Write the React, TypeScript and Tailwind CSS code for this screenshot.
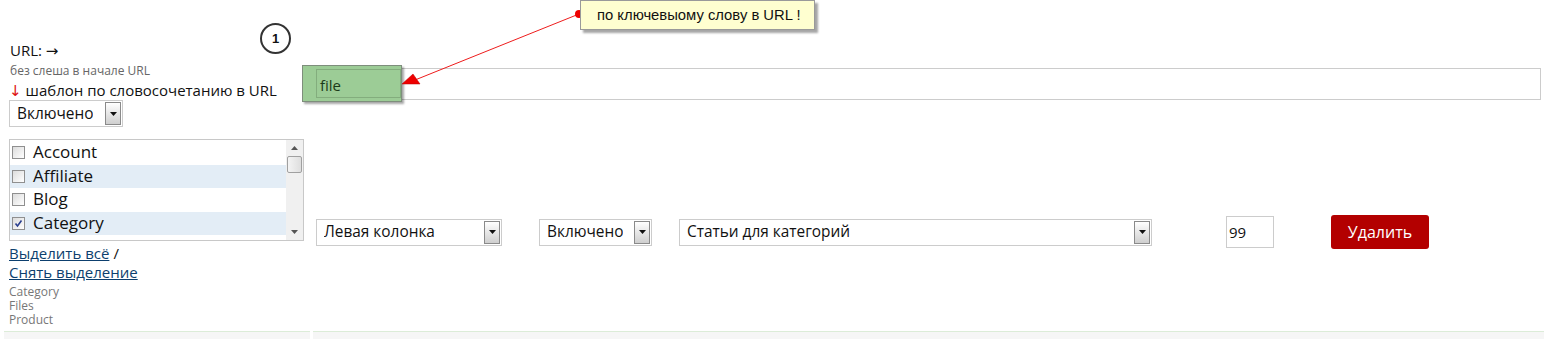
import React from "react";

const font = { fontFamily: '"Open Sans", "DejaVu Sans", sans-serif' };

function FakeSelect({ label, className }: { label: string; className: string }) {
  return (
    <div
      className={`flex h-[27px] items-center justify-between border border-[#cccccc] bg-white pl-[7px] pr-[1px] text-[15.4px] text-[#111] ${className}`}
    >
      <span className="truncate">{label}</span>
      <span className="flex h-[23px] w-[16px] shrink-0 items-center justify-center border border-[#8a8a8a] bg-gradient-to-b from-white to-[#cfcfcf]">
        <svg width="7" height="4" viewBox="0 0 7 4">
          <path d="M0 0h7L3.5 4z" fill="#111" />
        </svg>
      </span>
    </div>
  );
}

const items = [
  { name: "Account", checked: false },
  { name: "Affiliate", checked: false },
  { name: "Blog", checked: false },
  { name: "Category", checked: true },
  { name: "", checked: false },
];

function CheckBox({ checked }: { checked: boolean }) {
  return (
    <span className="flex h-[13px] w-[13px] shrink-0 items-center justify-center border border-[#8f8f8f] bg-gradient-to-br from-[#dcdcdc] to-white">
      {checked && (
        <svg width="9" height="9" viewBox="0 0 9 9">
          <path d="M1.5 4.5l2 2.5L7.5 1.5" stroke="#2a3f8f" strokeWidth="1.6" fill="none" />
        </svg>
      )}
    </span>
  );
}

function ListBox() {
  return (
    <div className="mt-[12px] flex h-[102px] w-[295px] overflow-hidden border border-[#c8c8c8] bg-white">
      <div className="flex-1 overflow-hidden pt-[1px]">
        {items.map((it, i) => (
          <div
            key={i}
            className={`flex h-[23.5px] items-center gap-[8px] pl-[2px] text-[17px] text-[#111] ${
              i % 2 === 1 ? "bg-[#e3edf6]" : "bg-white"
            }`}
          >
            <CheckBox checked={it.checked} />
            {it.name && <span className="-mt-[2px]">{it.name}</span>}
          </div>
        ))}
      </div>
      <div className="flex w-[17px] flex-col items-center bg-[#f0f0f0]">
        <div className="flex h-[16px] items-center justify-center">
          <svg width="7" height="4" viewBox="0 0 7 4">
            <path d="M0 4h7L3.5 0z" fill="#555" />
          </svg>
        </div>
        <div className="h-[17px] w-[15px] rounded-[2px] border border-[#a0a0a0] bg-gradient-to-r from-[#f4f4f4] to-[#dedede]" />
        <div className="flex-1" />
        <div className="flex h-[16px] items-center justify-center">
          <svg width="7" height="4" viewBox="0 0 7 4">
            <path d="M0 0h7L3.5 4z" fill="#555" />
          </svg>
        </div>
      </div>
    </div>
  );
}

export default function App() {
  return (
    <div className="relative h-[339px] w-[1548px] overflow-hidden bg-white" style={font}>
      <div className="flex h-[331px]">
        {/* left column */}
        <div className="relative w-[306px] pl-[9px] pt-[40px]">
          <div className="flex h-[20px] items-center pl-[1px] text-[15px] text-[#111]">URL: →</div>
          <div className="mt-[4px] flex h-[14px] items-center pl-[1px] text-[12px] text-[#666]">
            без слеша в начале URL
          </div>
          <div className="mt-[2px] flex h-[20px] items-center text-[15px] text-[#111]">
            <span className="mr-[4px] text-[#d11]">↓</span>шаблон по словосочетанию в URL
          </div>
          <FakeSelect label="Включено" className="w-[114px] h-[26px]" />
          <ListBox />
          <div className="mt-[3px] flex h-[19px] items-center text-[15px] text-[#111]">
            <a className="text-[#0d3f6e] underline">Выделить всё</a>
            <span className="ml-[4px]">/</span>
          </div>
          <div className="flex h-[19px] items-center text-[15px]">
            <a className="text-[#0d3f6e] underline">Снять выделение</a>
          </div>
          <div className="mt-[3px] text-[12px] leading-[14px] text-[#777]">
            <div>Category</div>
            <div>Files</div>
            <div>Product</div>
          </div>

          {/* numbered marker */}
          <div className="absolute left-[260px] top-[23px] flex h-[31px] w-[31px] items-center justify-center rounded-full border-2 border-[#333] bg-white">
            <span className="text-[13px] font-bold text-[#111]" style={{ fontFamily: '"Liberation Sans", Arial, sans-serif' }}>
              1
            </span>
          </div>
        </div>

        {/* right column */}
        <div className="flex flex-1 flex-col pr-[7px]">
          <div className="mt-[68px] h-[32px] border border-[#cccccc] bg-white" />
          <div className="mt-[115px] flex items-center">
            <FakeSelect label="Левая колонка" className="ml-[10px] w-[186px]" />
            <FakeSelect label="Включено" className="ml-[37px] w-[113px]" />
            <FakeSelect label="Статьи для категорий" className="ml-[27px] w-[473px]" />
            <div className="ml-[74px] flex h-[32px] w-[48px] items-center border border-[#cccccc] bg-white pl-[2px] text-[15px] text-[#111]">
              99
            </div>
            <button className="ml-[57px] flex h-[34px] w-[98px] items-center justify-center rounded-[3px] bg-[#b30000] text-[16px] text-white">
              Удалить
            </button>
          </div>
        </div>
      </div>

      {/* bottom strip */}
      <div className="flex h-[8px] px-[4px]">
        <div className="w-[306px] border-t border-[#dcecd8] bg-[#f6f6f6]" />
        <div className="ml-[3px] flex-1 border-t border-[#dcecd8] bg-[#f6f6f6]" />
      </div>

      {/* annotation: green highlight over the URL field */}
      <div className="absolute left-[302px] top-[65px] h-[37px] w-[100px] border border-[#7e8e7c] bg-[#9ccc96] shadow-[2px_2px_2px_rgba(0,0,0,0.35)]">
        <div className="absolute left-[13px] top-[3px] bottom-[3px] right-0 border border-[#83ad7d]" />
        <span className="absolute left-[17px] top-[8px] text-[15px] text-[#1b3a19]">file</span>
      </div>

      {/* annotation: arrow */}
      <svg className="absolute left-0 top-0" width="1548" height="339">
        <line x1="579" y1="14" x2="415" y2="80" stroke="#ee1c1c" strokeWidth="1" />
        <path d="M402 84 L413 74 L420 84 Z" fill="#e00" stroke="#b00" strokeWidth="0.5" />
        <circle cx="579" cy="14" r="4" fill="#e00" />
      </svg>

      {/* annotation: callout */}
      <div
        className="absolute left-[580px] top-0 flex h-[30px] w-[235px] items-center border border-[#9a9a9a] bg-[#ffffd0] pl-[16px] text-[14.8px] text-[#111] shadow-[3px_3px_2px_rgba(0,0,0,0.35)]"
        style={{ fontFamily: '"Liberation Sans", Arial, sans-serif' }}
      >
        по ключевыому слову в URL !
      </div>
    </div>
  );
}
